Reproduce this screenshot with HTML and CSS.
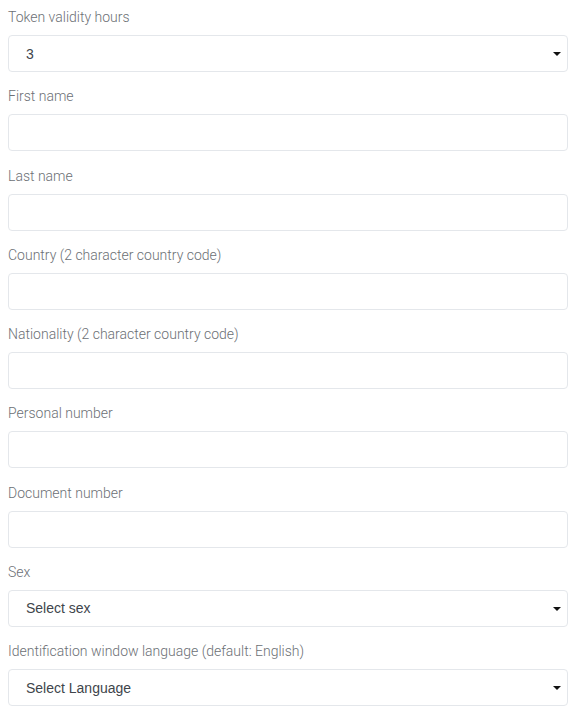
FILE: index.html
```html
<!DOCTYPE html>
<html>
<head>
<meta charset="utf-8">
<link rel="stylesheet" href="styles.css">
</head>
<body>
<form class="form">
  <div class="group">
    <label class="label">Token validity hours</label>
    <div class="select"><span class="value">3</span><span class="caret"></span></div>
  </div>
  <div class="group">
    <label class="label">First name</label>
    <div class="input"></div>
  </div>
  <div class="group">
    <label class="label">Last name</label>
    <div class="input"></div>
  </div>
  <div class="group">
    <label class="label">Country (2 character country code)</label>
    <div class="input"></div>
  </div>
  <div class="group">
    <label class="label">Nationality (2 character country code)</label>
    <div class="input"></div>
  </div>
  <div class="group">
    <label class="label">Personal number</label>
    <div class="input"></div>
  </div>
  <div class="group">
    <label class="label">Document number</label>
    <div class="input"></div>
  </div>
  <div class="group">
    <label class="label">Sex</label>
    <div class="select"><span class="value">Select sex</span><span class="caret"></span></div>
  </div>
  <div class="group">
    <label class="label">Identification window language (default: English)</label>
    <div class="select"><span class="value">Select Language</span><span class="caret"></span></div>
  </div>
</form>
</body>
</html>
```

FILE: styles.css
```css
html, body {
  margin: 0;
  padding: 0;
  background: #ffffff;
}
body {
  padding: 8px;
}
.form {
  display: flex;
  flex-direction: column;
  width: 560px;
}
.group {
  display: flex;
  flex-direction: column;
  margin-bottom: 15.25px;
}
.label {
  font-family: Roboto, "Liberation Sans", sans-serif;
  font-weight: 300;
  font-size: 14px;
  line-height: 19px;
  color: #6c7075;
  margin-bottom: 8px;
}
.input, .select {
  box-sizing: border-box;
  height: 37px;
  border: 1px solid #e4e7eb;
  border-radius: 4px;
  background: #fff;
}
.select {
  display: flex;
  align-items: center;
  justify-content: space-between;
  padding: 0 6px 0 17px;
}
.value {
  font-family: "Liberation Sans", Arial, sans-serif;
  font-size: 14px;
  color: #40454b;
}
.caret {
  width: 0;
  height: 0;
  border-left: 4px solid transparent;
  border-right: 4px solid transparent;
  border-top: 4px solid #111;
  margin-top: 1px;
}
```
